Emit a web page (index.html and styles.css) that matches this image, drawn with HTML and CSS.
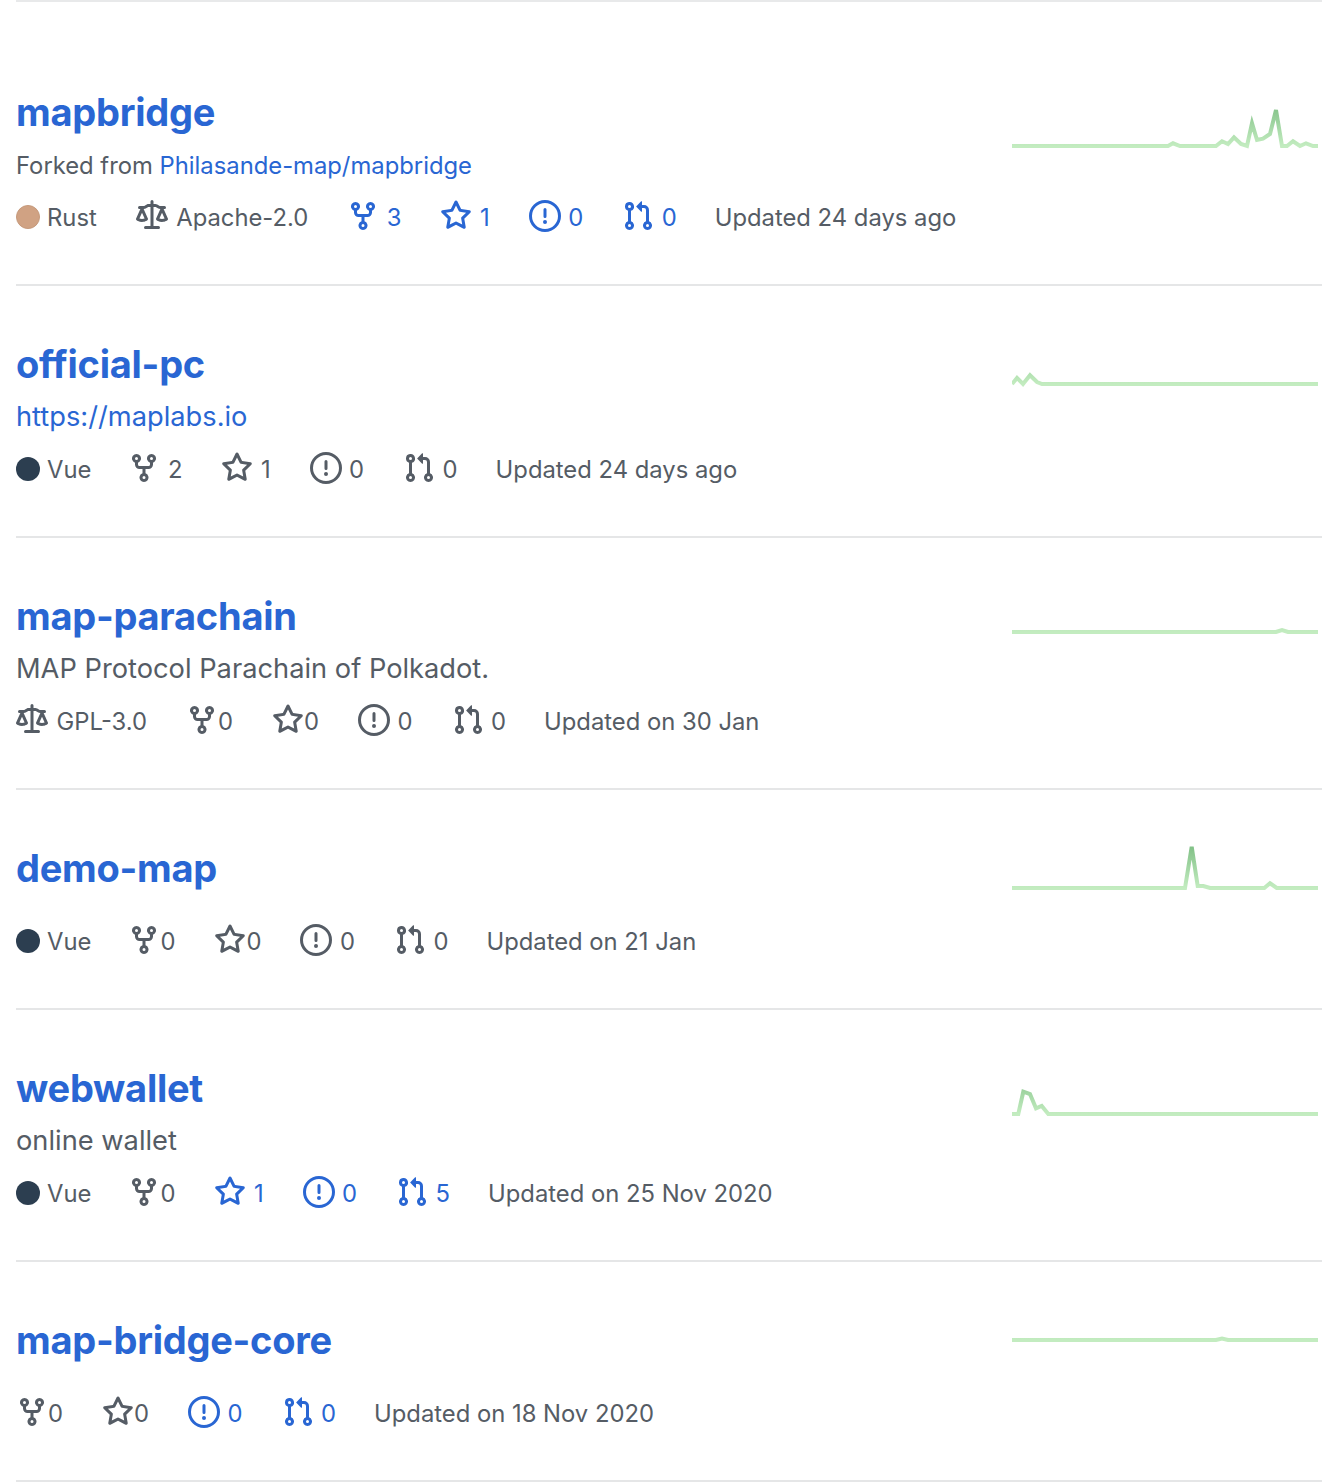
FILE: index.html
```html
<!DOCTYPE html>
<html lang="en">
<head>
    <meta charset="UTF-8">
    <meta name="viewport" content="width=device-width, initial-scale=1.0">
    <title>Repositories</title>
    <link rel="stylesheet" href="styles.css">
</head>
<body>
    <!-- Shared icons and sparkline colour -->
    <svg class="sprites" aria-hidden="true">
        <defs>
            <linearGradient id="spark" gradientUnits="userSpaceOnUse" x1="0" y1="60" x2="0" y2="15">
                <stop offset="0" stop-color="#c3ecc0"/>
                <stop offset="1" stop-color="#7cbd82"/>
            </linearGradient>
        </defs>
        <symbol id="i-law" viewBox="0 0 16 16"><path fill-rule="evenodd" d="M8.75.75a.75.75 0 00-1.5 0V2h-.984c-.305 0-.604.08-.869.23l-1.288.737A.25.25 0 013.984 3H1.75a.75.75 0 000 1.5h.428L.066 9.192a.75.75 0 00.154.838l.53-.53-.53.53v.001l.002.002.002.002.006.006.016.015.045.04a3.514 3.514 0 00.686.45A4.492 4.492 0 003 11c.88 0 1.556-.22 2.023-.454a3.515 3.515 0 00.686-.45l.045-.04.016-.015.006-.006.002-.002.001-.002L5.25 9.5l.53.53a.75.75 0 00.154-.838L3.822 4.5h.162c.305 0 .604-.08.869-.23l1.289-.737a.25.25 0 01.124-.033h.984V13h-2.5a.75.75 0 000 1.5h6.5a.75.75 0 000-1.5h-2.5V3.5h.984a.25.25 0 01.124.033l1.29.736c.264.152.563.231.868.231h.162l-2.112 4.692a.75.75 0 00.154.838l.53-.53-.53.53v.001l.002.002.002.002.006.006.016.015.045.04a3.517 3.517 0 00.686.45A4.492 4.492 0 0013 11c.88 0 1.556-.22 2.023-.454a3.512 3.512 0 00.686-.45l.045-.04.01-.01.006-.005.006-.006.002-.002.001-.002-.529-.531.53.53a.75.75 0 00.154-.838L13.823 4.5h.427a.75.75 0 000-1.5h-2.234a.25.25 0 01-.124-.033l-1.29-.736A1.75 1.75 0 009.735 2H8.75V.75zM1.695 9.227c.285.135.718.273 1.305.273s1.02-.138 1.305-.273L3 6.327l-1.305 2.9zm10 0c.285.135.718.273 1.305.273s1.02-.138 1.305-.273L13 6.327l-1.305 2.9z"/></symbol>
        <symbol id="i-fork" viewBox="0 0 16 16"><path fill-rule="evenodd" d="M5 3.25a.75.75 0 11-1.5 0 .75.75 0 011.5 0zm0 2.122a2.25 2.25 0 10-1.5 0v.878A2.25 2.25 0 005.75 8.5h1.5v2.128a2.251 2.251 0 101.5 0V8.5h1.5a2.25 2.25 0 002.25-2.25v-.878a2.25 2.25 0 10-1.5 0v.878a.75.75 0 01-.75.75h-4.5A.75.75 0 015 6.25v-.878zm3.75 7.378a.75.75 0 11-1.5 0 .75.75 0 011.5 0zm3-8.75a.75.75 0 100-1.5.75.75 0 000 1.5z"/></symbol>
        <symbol id="i-star" viewBox="0 0 16 16"><path fill-rule="evenodd" d="M8 .25a.75.75 0 01.673.418l1.882 3.815 4.21.612a.75.75 0 01.416 1.279l-3.046 2.97.719 4.192a.75.75 0 01-1.088.791L8 12.347l-3.766 1.98a.75.75 0 01-1.088-.79l.72-4.194L.818 6.374a.75.75 0 01.416-1.28l4.21-.611L7.327.668A.75.75 0 018 .25zm0 2.445L6.615 5.5a.75.75 0 01-.564.41l-3.097.45 2.24 2.184a.75.75 0 01.216.664l-.528 3.084 2.769-1.456a.75.75 0 01.698 0l2.77 1.456-.53-3.084a.75.75 0 01.216-.664l2.24-2.183-3.096-.45a.75.75 0 01-.564-.41L8 2.694v.001z"/></symbol>
        <symbol id="i-issue" viewBox="0 0 16 16"><path fill-rule="evenodd" d="M8 1.5a6.5 6.5 0 100 13 6.5 6.5 0 000-13zM0 8a8 8 0 1116 0A8 8 0 010 8zm9 3a1 1 0 11-2 0 1 1 0 012 0zm-.25-6.25a.75.75 0 00-1.5 0v3.5a.75.75 0 001.5 0v-3.5z"/></symbol>
        <symbol id="i-pr" viewBox="0 0 16 16"><path fill-rule="evenodd" d="M7.177 3.073L9.573.677A.25.25 0 0110 .854v4.792a.25.25 0 01-.427.177L7.177 3.427a.25.25 0 010-.354zM3.75 2.5a.75.75 0 100 1.5.75.75 0 000-1.5zm-2.25.75a2.25 2.25 0 113 2.122v5.256a2.251 2.251 0 11-1.5 0V5.372A2.25 2.25 0 011.5 3.25zM11 2.5h-1V4h1a1 1 0 011 1v5.628a2.251 2.251 0 101.5 0V5A2.5 2.5 0 0011 2.5zm1 10.25a.75.75 0 111.5 0 .75.75 0 01-1.5 0zM3.75 12a.75.75 0 100 1.5.75.75 0 000-1.5z"/></symbol>
    </svg>

    <ul class="repo-list">
        <!-- mapbridge -->
        <li class="repo">
            <div class="repo-info">
                <h3 class="repo-name"><a href="#">mapbridge</a></h3>
                <p class="repo-fork">Forked from <a href="#">Philasande-map/mapbridge</a></p>
                <div class="repo-meta">
                    <span class="meta-item lang"><span class="lang-dot rust"></span>Rust</span>
                    <span class="meta-item license"><svg class="icon"><use href="#i-law"/></svg>Apache-2.0</span>
                    <a class="meta-item link" href="#"><svg class="icon"><use href="#i-fork"/></svg>3</a>
                    <a class="meta-item link" href="#"><svg class="icon"><use href="#i-star"/></svg>1</a>
                    <a class="meta-item link" href="#"><svg class="icon"><use href="#i-issue"/></svg>0</a>
                    <a class="meta-item link" href="#"><svg class="icon"><use href="#i-pr"/></svg>0</a>
                    <span class="meta-item updated">Updated 24 days ago</span>
                </div>
            </div>
            <svg class="spark" viewBox="0 -4 306 70"><polyline points="0,60 156,60 161,57.3 168,60 204,60 210,55.3 216,58 222,51.3 229,58 235,60 240,37.3 245,54 251,52.7 258,48 264,24 270,60 275,60 281,55.3 288,60 294,57.3 301,60 306,60"/></svg>
        </li>
        <!-- official-pc -->
        <li class="repo">
            <div class="repo-info">
                <h3 class="repo-name"><a href="#">official-pc</a></h3>
                <p class="repo-desc"><a href="#">https://maplabs.io</a></p>
                <div class="repo-meta">
                    <span class="meta-item lang vue"><span class="lang-dot vue"></span>Vue</span>
                    <a class="meta-item" href="#"><svg class="icon"><use href="#i-fork"/></svg>2</a>
                    <a class="meta-item" href="#"><svg class="icon"><use href="#i-star"/></svg>1</a>
                    <a class="meta-item" href="#"><svg class="icon"><use href="#i-issue"/></svg>0</a>
                    <a class="meta-item" href="#"><svg class="icon"><use href="#i-pr"/></svg>0</a>
                    <span class="meta-item updated">Updated 24 days ago</span>
                </div>
            </div>
            <svg class="spark" viewBox="0 10 306 70"><polyline points="0,60 5,54 11,60 18,51.3 25,58 30,60 306,60"/></svg>
        </li>
        <!-- map-parachain -->
        <li class="repo">
            <div class="repo-info">
                <h3 class="repo-name"><a href="#">map-parachain</a></h3>
                <p class="repo-desc">MAP Protocol Parachain of Polkadot.</p>
                <div class="repo-meta">
                    <span class="meta-item license"><svg class="icon"><use href="#i-law"/></svg>GPL-3.0</span>
                    <a class="meta-item tight" href="#"><svg class="icon"><use href="#i-fork"/></svg>0</a>
                    <a class="meta-item tight" href="#"><svg class="icon"><use href="#i-star"/></svg>0</a>
                    <a class="meta-item" href="#"><svg class="icon"><use href="#i-issue"/></svg>0</a>
                    <a class="meta-item" href="#"><svg class="icon"><use href="#i-pr"/></svg>0</a>
                    <span class="meta-item updated">Updated on 30 Jan</span>
                </div>
            </div>
            <svg class="spark" viewBox="0 14 306 70"><polyline points="0,60 264,60 270,58 276,60 306,60"/></svg>
        </li>
        <!-- demo-map -->
        <li class="repo">
            <div class="repo-info">
                <h3 class="repo-name"><a href="#">demo-map</a></h3>
                <div class="repo-meta">
                    <span class="meta-item lang vue"><span class="lang-dot vue"></span>Vue</span>
                    <a class="meta-item tight" href="#"><svg class="icon"><use href="#i-fork"/></svg>0</a>
                    <a class="meta-item tight" href="#"><svg class="icon"><use href="#i-star"/></svg>0</a>
                    <a class="meta-item" href="#"><svg class="icon"><use href="#i-issue"/></svg>0</a>
                    <a class="meta-item" href="#"><svg class="icon"><use href="#i-pr"/></svg>0</a>
                    <span class="meta-item updated">Updated on 21 Jan</span>
                </div>
            </div>
            <svg class="spark" viewBox="0 10 306 70"><polyline points="0,60 173,60 179.7,18.7 185.7,58 191.3,58 198,60 252.3,60 258,55.3 264.7,60 306,60"/></svg>
        </li>
        <!-- webwallet -->
        <li class="repo">
            <div class="repo-info">
                <h3 class="repo-name"><a href="#">webwallet</a></h3>
                <p class="repo-desc">online wallet</p>
                <div class="repo-meta">
                    <span class="meta-item lang vue"><span class="lang-dot vue"></span>Vue</span>
                    <a class="meta-item tight" href="#"><svg class="icon"><use href="#i-fork"/></svg>0</a>
                    <a class="meta-item link" href="#"><svg class="icon"><use href="#i-star"/></svg>1</a>
                    <a class="meta-item link" href="#"><svg class="icon"><use href="#i-issue"/></svg>0</a>
                    <a class="meta-item link" href="#"><svg class="icon"><use href="#i-pr"/></svg>5</a>
                    <span class="meta-item updated">Updated on 25 Nov 2020</span>
                </div>
            </div>
            <svg class="spark" viewBox="0 4 306 70"><polyline points="0,60 6.3,60 11.3,37.7 18,40 24,54.3 29.7,52 36.3,60 306,60"/></svg>
        </li>
        <!-- map-bridge-core -->
        <li class="repo">
            <div class="repo-info">
                <h3 class="repo-name"><a href="#">map-bridge-core</a></h3>
                <div class="repo-meta">
                    <a class="meta-item tight" href="#"><svg class="icon"><use href="#i-fork"/></svg>0</a>
                    <a class="meta-item tight" href="#"><svg class="icon"><use href="#i-star"/></svg>0</a>
                    <a class="meta-item link" href="#"><svg class="icon"><use href="#i-issue"/></svg>0</a>
                    <a class="meta-item link" href="#"><svg class="icon"><use href="#i-pr"/></svg>0</a>
                    <span class="meta-item updated">Updated on 18 Nov 2020</span>
                </div>
            </div>
            <svg class="spark" viewBox="0 30 306 70"><polyline points="0,60 204,60 210,58.5 216,60 306,60"/></svg>
        </li>
    </ul>
</body>
</html>
```
FILE: styles.css
```css
* {
    margin: 0;
    padding: 0;
    box-sizing: border-box;
}
body {
    background-color: #fff;
    color: #555c65;
    font-family: Inter, "Liberation Sans", sans-serif;
}
a {
    color: inherit;
    text-decoration: none;
}
.sprites {
    position: absolute;
    width: 0;
    height: 0;
}
/* Repo list */
.repo-list {
    list-style: none;
    margin: 0 14px 0 16px;
    padding-top: 32px;
    border-top: 2px solid #e8e9ea;
}
.repo {
    display: flex;
    justify-content: space-between;
    padding: 48px 4px 48px 0;
    border-bottom: 2px solid #e5e6e7;
}
.repo-info {
    display: flex;
    flex-direction: column;
}
.repo-name {
    height: 60px;
    margin-bottom: 8px;
    font-size: 38px;
    font-weight: 650;
    line-height: 60px;
    letter-spacing: -0.25px;
    color: #2966d3;
}
.repo-fork {
    height: 32px;
    font-size: 23.8px;
    line-height: 32px;
}
.repo-fork a,
.repo-desc a {
    color: #2966d3;
}
.repo-desc {
    height: 32px;
    font-size: 27.25px;
    line-height: 30px;
}
/* Meta row */
.repo-meta {
    display: flex;
    align-items: center;
    height: 37px;
    margin-top: 17px;
    padding-bottom: 1px;
    font-size: 23.8px;
}
.meta-item {
    display: inline-flex;
    align-items: center;
    gap: 7.5px;
    margin-right: 39px;
}
.meta-item.tight {
    gap: 0;
}
.meta-item.link {
    color: #2966d3;
}
.meta-item.lang {
    gap: 7px;
}
.meta-item.vue {
    margin-right: 37px;
}
.meta-item.license {
    gap: 8.5px;
}
.meta-item.updated {
    margin-left: -1px;
}
.icon {
    width: 32px;
    height: 32px;
    margin-bottom: 2px;
    fill: currentColor;
}
.lang-dot {
    width: 24px;
    height: 24px;
    border-radius: 50%;
}
.lang-dot.rust {
    background-color: #d0a283;
    border: 1px solid #c69a7c;
}
.lang-dot.vue {
    background-color: #2c3e50;
}
/* Sparkline */
.spark {
    flex: none;
    width: 306px;
    height: 70px;
}
.spark polyline {
    fill: none;
    stroke: url(#spark);
    stroke-width: 4;
}
```
